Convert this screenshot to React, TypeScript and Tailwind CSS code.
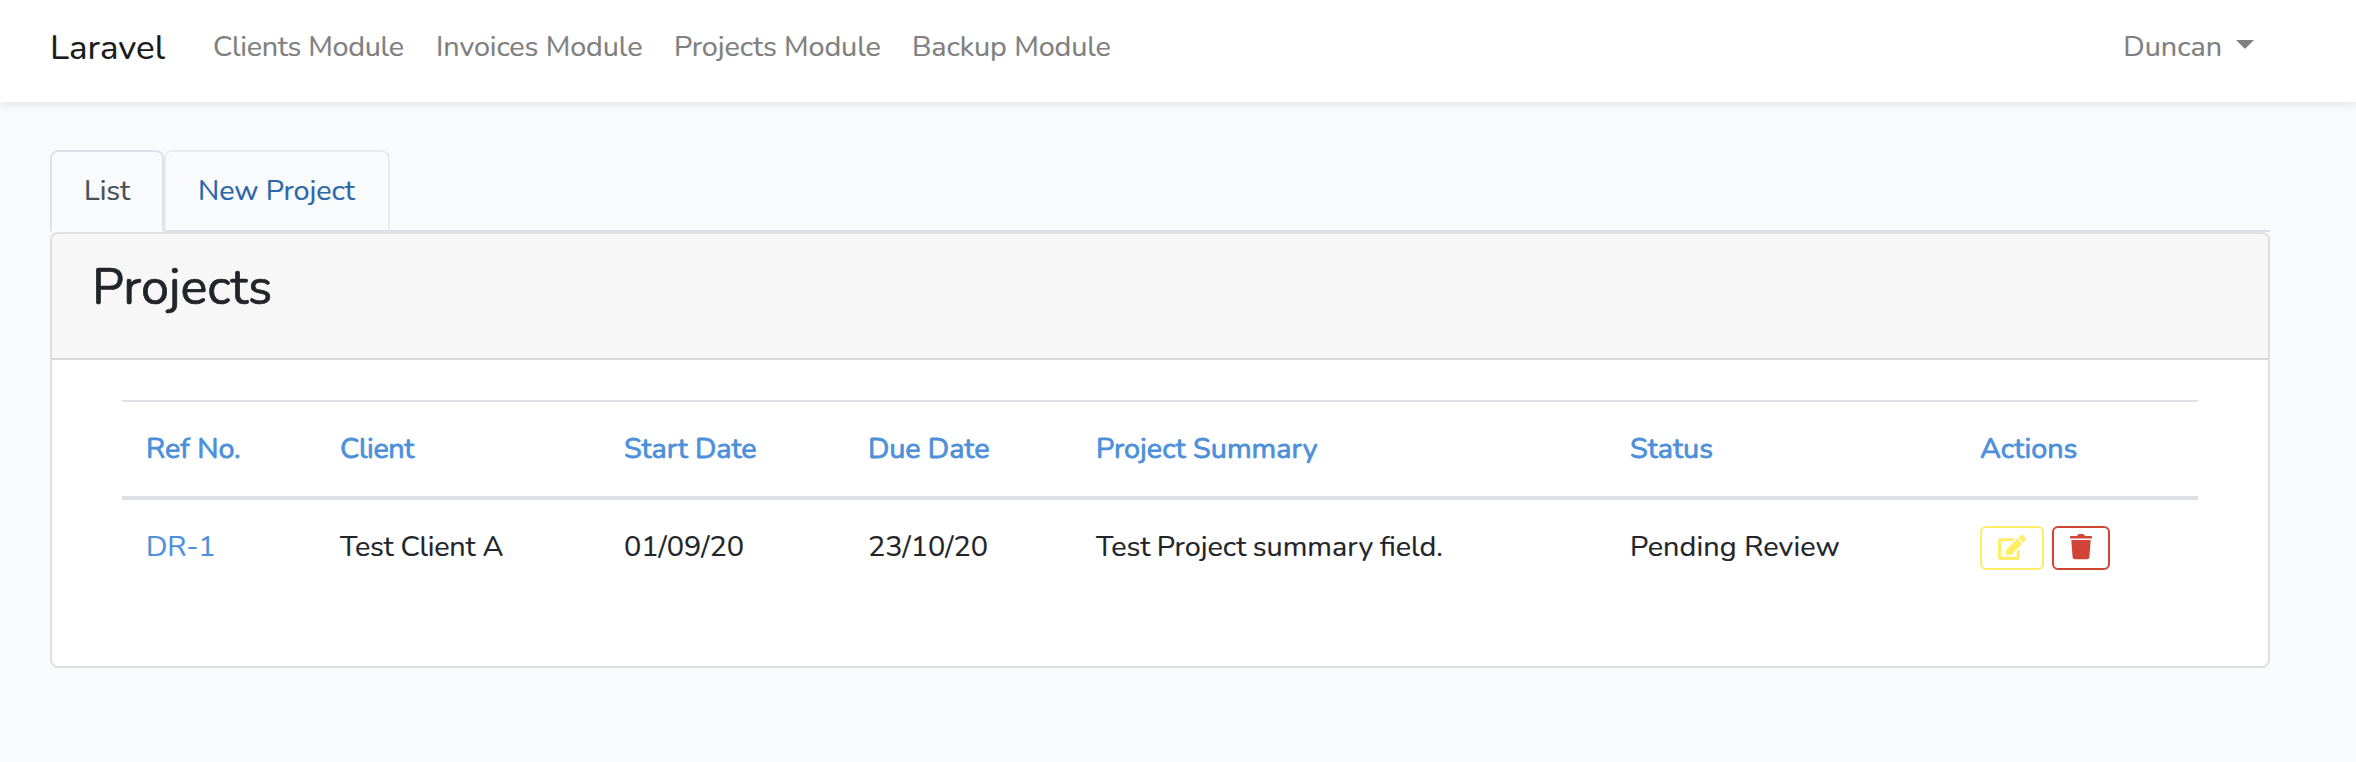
import { FaEdit } from "react-icons/fa";

const navItems = [
  { label: "Clients Module", style: "w-[223px] tracking-[-0.3px]" },
  { label: "Invoices Module", style: "w-[238px] tracking-[-0.1px]" },
  { label: "Projects Module", style: "w-[238px] tracking-[-0.1px]" },
  { label: "Backup Module", style: "w-[230px] tracking-[-0.1px]" },
];

const headings = [
  { label: "Ref No.", style: "" },
  { label: "Client", style: "tracking-[-0.4px]" },
  { label: "Start Date", style: "tracking-[-0.1px]" },
  { label: "Due Date", style: "tracking-[-0.1px]" },
  { label: "Project Summary", style: "" },
  { label: "Status", style: "" },
  { label: "Actions", style: "" },
];

const values = [
  { label: "Test Client A", style: "tracking-[-0.25px]" },
  { label: "01/09/20", style: "" },
  { label: "23/10/20", style: "" },
  { label: "Test Project summary field.", style: "[word-spacing:-1px]" },
  { label: "Pending Review", style: "tracking-[0.1px]" },
];

const columns = "grid grid-cols-[194px_284px_244px_228px_534px_350px_242px]";

function TrashIcon() {
  return (
    <svg viewBox="0 0 22 26" className="h-[26px] w-[22px]" fill="currentColor">
      <path d="M0 2.800Q0 2 .8 2H7l1-1.400Q8.400 0 9 0h4q.6 0 1 .6L15 2h6.200Q22 2 22 2.800V4.400H0Z" />
      <path d="M1.300 6H20.700L19.400 23.200Q19.200 25.300 17 25.300H5Q2.800 25.300 2.600 23.200Z" />
    </svg>
  );
}

export default function App() {
  return (
    <div className="h-[762px] w-full overflow-hidden bg-[#f8fafc] font-[Nunito,Lato,sans-serif] text-[28.8px] leading-[46px] text-[#212529] [-webkit-text-stroke:0.2px]">
      <nav className="flex h-[102px] items-start bg-white pl-[50px] pr-[102px] pt-[24px] shadow-[0_4px_8px_rgba(0,0,0,0.075)]">
        <a className="mt-[-2px] w-[163px] text-[35px] leading-[52px] text-[#1a1a1a]">Laravel</a>
        <div className="flex flex-1 text-[#808080]">
          {navItems.map((item) => (
            <a key={item.label} className={item.style}>
              {item.label}
            </a>
          ))}
        </div>
        <button className="flex items-center gap-[14px] text-[#808080]">
          Duncan
          <svg viewBox="0 0 18 9" className="mb-1.5 h-[9px] w-[18px]" fill="currentColor">
            <path d="M0 0H18L9.500 8.600H8.500Z" />
          </svg>
        </button>
      </nav>

      <main className="pl-[50px] pr-[86px] pt-12">
        <div className="flex h-[82px] border-b-2 border-[#dee2e6]">
          <a className="h-[82px] w-[114px] rounded-t-[8px] border-2 border-[#dee2e6] border-b-[#f8fafc] bg-[#f8fafc] pl-[32px] pt-[16px] text-[#495057]">
            List
          </a>
          <a className="h-[82px] w-[226px] rounded-t-[8px] border-2 border-[#e9ecef] border-b-[#dee2e6] pl-[32px] pt-[16px] tracking-[-0.1px] text-[#2c67a6]">
            New Project
          </a>
        </div>

        <section className="h-[436px] overflow-hidden rounded-[8px] border-2 border-[#dfdfdf] bg-white">
          <header className="h-[126px] border-b-2 border-[#d9d9d9] bg-[#f7f7f7] pl-10 pt-[24px]">
            <h3 className="text-[50.4px] leading-[60px] tracking-[-0.1px] [-webkit-text-stroke:0.7px]">Projects</h3>
          </header>
          <div className="px-[70px] pt-10">
            <div
              className={`${columns} h-[100px] border-b-4 border-t-2 border-[#dee2e6] text-[#4c90da] [-webkit-text-stroke:0.8px]`}
            >
              {headings.map((heading) => (
                <div key={heading.label} className={`px-6 pt-6 ${heading.style}`}>
                  {heading.label}
                </div>
              ))}
            </div>
            <div className={`${columns} h-[94px]`}>
              <a className="px-6 pt-6 text-[#4c90da]">DR-1</a>
              {values.map((value) => (
                <div key={value.label} className={`px-6 pt-6 ${value.style}`}>
                  {value.label}
                </div>
              ))}
              <div className="flex gap-2 pl-6 pt-[26px]">
                <button className="flex h-11 w-16 items-center justify-center rounded-[6px] border-2 border-[#ffed66] pb-px text-[#ffed66]">
                  <FaEdit className="h-[25px] w-[28px]" />
                </button>
                <button className="flex h-11 w-[58px] items-center justify-center rounded-[6px] border-2 border-[#d14538] pb-[3px] text-[#d14538]">
                  <TrashIcon />
                </button>
              </div>
            </div>
          </div>
        </section>
      </main>
    </div>
  );
}
